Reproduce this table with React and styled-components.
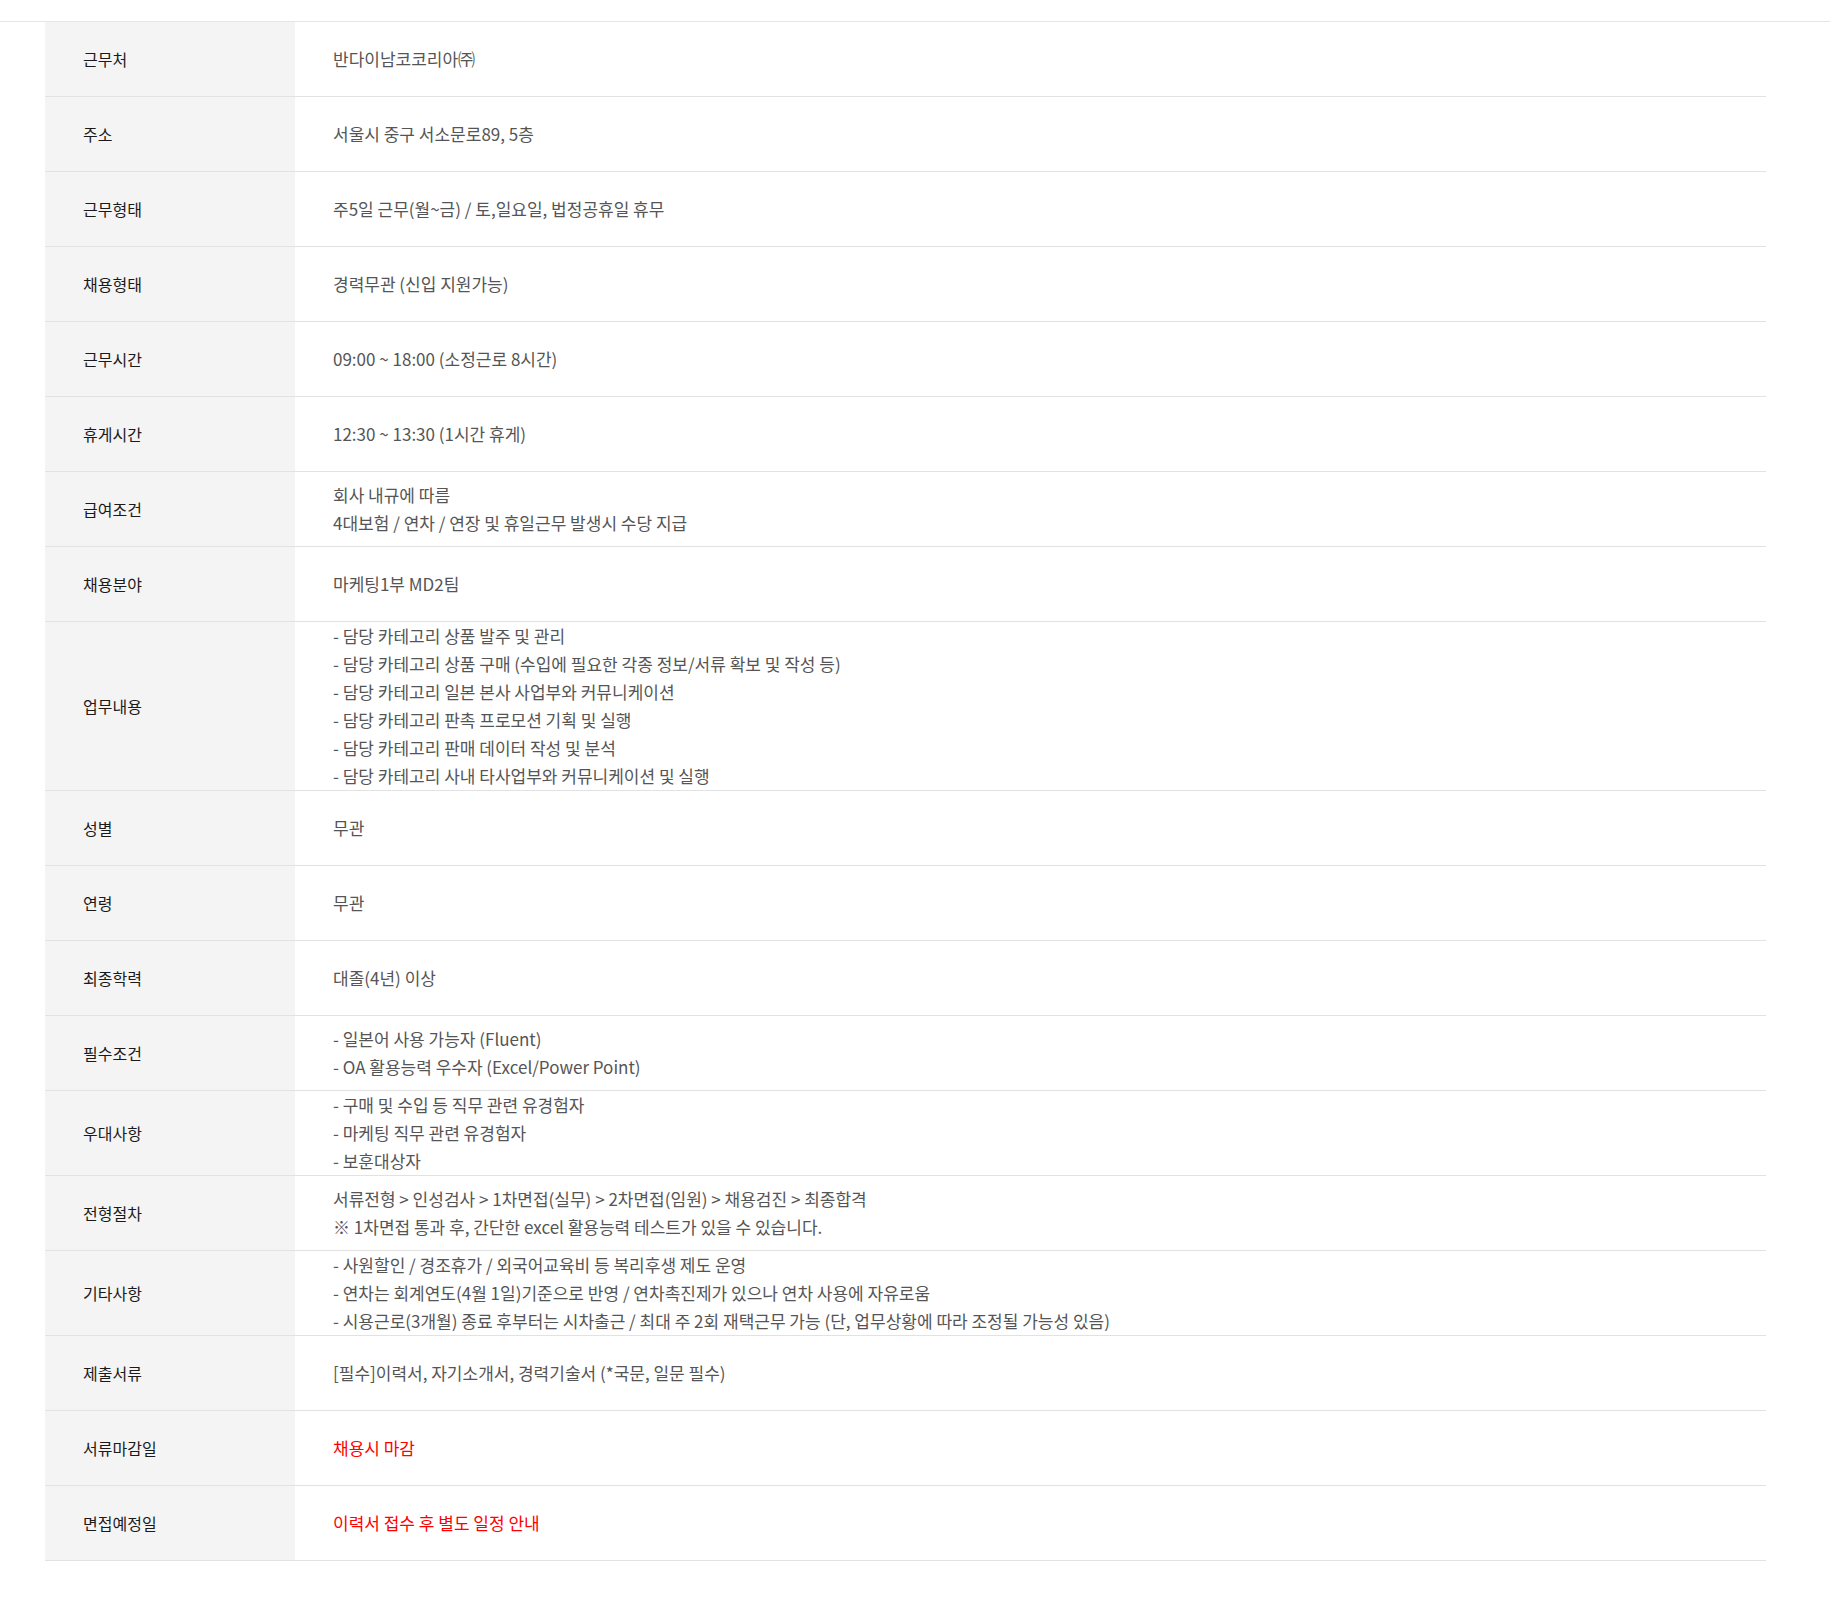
import React from 'react';
import styled, { createGlobalStyle } from 'styled-components';

const GlobalStyle = createGlobalStyle`
  html, body {
    margin: 0;
    padding: 0;
    background: #fff;
  }
  body {
    font-family: "Noto Sans CJK KR", "Noto Sans", sans-serif;
  }
`;

const Page = styled.div`
  padding-top: 21px;
  padding-bottom: 45px;
`;

const Section = styled.div`
  border-top: 1px solid #e6e6e6;
`;

const Table = styled.table`
  width: 1721px;
  margin-left: 45px;
  border-collapse: collapse;
  table-layout: fixed;
`;

const Row = styled.tr`
  border-bottom: 1px solid #e2e2e2;
`;

const Label = styled.th`
  width: 250px;
  height: 74px;
  padding: 0 0 0 38px;
  box-sizing: border-box;
  background: #f4f4f4;
  text-align: left;
  vertical-align: middle;
  font-size: 16px;
  font-weight: 400;
  color: #1a1a1a;
`;

const Value = styled.td`
  height: 74px;
  padding: 0 0 0 38px;
  vertical-align: middle;
  font-size: 17px;
  line-height: 28px;
  color: ${props => (props.red ? '#ff0000' : '#555')};
`;

const Line = styled.div`
  white-space: nowrap;
`;

const rows = [
  { label: '근무처', lines: ['반다이남코코리아㈜'] },
  { label: '주소', lines: ['서울시 중구 서소문로89, 5층'] },
  { label: '근무형태', lines: ['주5일 근무(월~금) / 토,일요일, 법정공휴일 휴무'] },
  { label: '채용형태', lines: ['경력무관 (신입 지원가능)'] },
  { label: '근무시간', lines: ['09:00 ~ 18:00 (소정근로 8시간)'] },
  { label: '휴게시간', lines: ['12:30 ~ 13:30 (1시간 휴게)'] },
  { label: '급여조건', lines: ['회사 내규에 따름', '4대보험 / 연차 / 연장 및 휴일근무 발생시 수당 지급'] },
  { label: '채용분야', lines: ['마케팅1부 MD2팀'] },
  {
    label: '업무내용',
    lines: [
      '- 담당 카테고리 상품 발주 및 관리',
      '- 담당 카테고리 상품 구매 (수입에 필요한 각종 정보/서류 확보 및 작성 등)',
      '- 담당 카테고리 일본 본사 사업부와 커뮤니케이션',
      '- 담당 카테고리 판촉 프로모션 기획 및 실행',
      '- 담당 카테고리 판매 데이터 작성 및 분석',
      '- 담당 카테고리 사내 타사업부와 커뮤니케이션 및 실행',
    ],
  },
  { label: '성별', lines: ['무관'] },
  { label: '연령', lines: ['무관'] },
  { label: '최종학력', lines: ['대졸(4년) 이상'] },
  { label: '필수조건', lines: ['- 일본어 사용 가능자 (Fluent)', '- OA 활용능력 우수자 (Excel/Power Point)'] },
  { label: '우대사항', lines: ['- 구매 및 수입 등 직무 관련 유경험자', '- 마케팅 직무 관련 유경험자', '- 보훈대상자'] },
  {
    label: '전형절차',
    lines: [
      '서류전형 > 인성검사 > 1차면접(실무) > 2차면접(임원) > 채용검진 > 최종합격',
      '※ 1차면접 통과 후, 간단한 excel 활용능력 테스트가 있을 수 있습니다.',
    ],
  },
  {
    label: '기타사항',
    lines: [
      '- 사원할인 / 경조휴가 / 외국어교육비 등 복리후생 제도 운영',
      '- 연차는 회계연도(4월 1일)기준으로 반영 / 연차촉진제가 있으나 연차 사용에 자유로움',
      '- 시용근로(3개월) 종료 후부터는 시차출근 / 최대 주 2회 재택근무 가능 (단, 업무상황에 따라 조정될 가능성 있음)',
    ],
  },
  { label: '제출서류', lines: ['[필수]이력서, 자기소개서, 경력기술서 (*국문, 일문 필수)'] },
  { label: '서류마감일', lines: ['채용시 마감'], red: true },
  { label: '면접예정일', lines: ['이력서 접수 후 별도 일정 안내'], red: true },
];

function App() {
  return (
    <>
      <GlobalStyle />
      <Page>
        <Section>
          <Table>
            <tbody>
              {rows.map(row => (
                <Row key={row.label}>
                  <Label>{row.label}</Label>
                  <Value red={row.red}>
                    {row.lines.map(line => (
                      <Line key={line}>{line}</Line>
                    ))}
                  </Value>
                </Row>
              ))}
            </tbody>
          </Table>
        </Section>
      </Page>
    </>
  );
}

export default App;
